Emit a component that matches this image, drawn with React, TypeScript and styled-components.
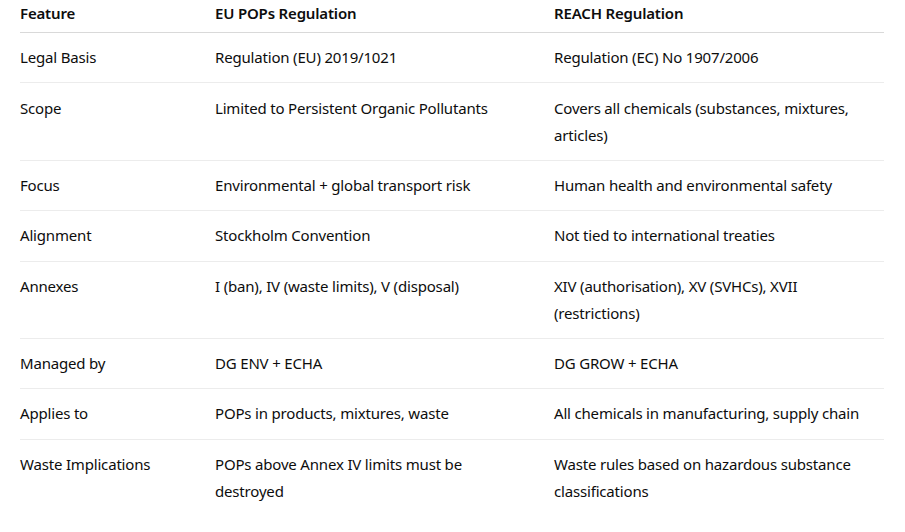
import React from "react";
import styled, { createGlobalStyle } from "styled-components";

const GlobalStyle = createGlobalStyle`
  html, body {
    margin: 0;
    padding: 0;
    background: #ffffff;
  }
  body {
    font-family: "Noto Sans", "Open Sans", sans-serif;
    color: #0d0d0d;
  }
`;

const ROWS = [
  ["Legal Basis", "Regulation (EU) 2019/1021", "Regulation (EC) No 1907/2006"],
  [
    "Scope",
    "Limited to Persistent Organic Pollutants",
    "Covers all chemicals (substances, mixtures, articles)",
  ],
  ["Focus", "Environmental + global transport risk", "Human health and environmental safety"],
  ["Alignment", "Stockholm Convention", "Not tied to international treaties"],
  [
    "Annexes",
    "I (ban), IV (waste limits), V (disposal)",
    "XIV (authorisation), XV (SVHCs), XVII (restrictions)",
  ],
  ["Managed by", "DG ENV + ECHA", "DG GROW + ECHA"],
  ["Applies to", "POPs in products, mixtures, waste", "All chemicals in manufacturing, supply chain"],
  [
    "Waste Implications",
    "POPs above Annex IV limits must be destroyed",
    "Waste rules based on hazardous substance classifications",
  ],
];

function App() {
  return (
    <>
      <GlobalStyle />
      <Wrapper>
        <Table>
          <colgroup>
            <col style={{ width: 195 }} />
            <col style={{ width: 339 }} />
            <col style={{ width: 330 }} />
          </colgroup>
          <thead>
            <tr>
              <Th>Feature</Th>
              <Th>EU POPs Regulation</Th>
              <Th>REACH Regulation</Th>
            </tr>
          </thead>
          <tbody>
            {ROWS.map((row) => (
              <Row key={row[0]}>
                {row.map((cell, i) => (
                  <Td key={i}>{cell}</Td>
                ))}
              </Row>
            ))}
          </tbody>
        </Table>
      </Wrapper>
    </>
  );
}

export default App;

const Wrapper = styled.div`
  padding: 0 21px 0 20px;
`;

const Table = styled.table`
  width: 864px;
  table-layout: fixed;
  border-collapse: collapse;
  font-size: 15px;
  line-height: 27px;
  letter-spacing: -0.18px;
`;

const Th = styled.th`
  text-align: left;
  font-weight: 600;
  padding: 0 24px 5px 0;
  border-bottom: 1px solid #d9d9d9;
  &:last-child {
    padding-right: 0;
  }
`;

const Row = styled.tr`
  border-bottom: 1px solid #ececec;
  &:last-child {
    border-bottom: none;
  }
`;

const Td = styled.td`
  vertical-align: top;
  padding: 11.2px 24px 11.2px 0;
  &:last-child {
    padding-right: 0;
  }
`;
